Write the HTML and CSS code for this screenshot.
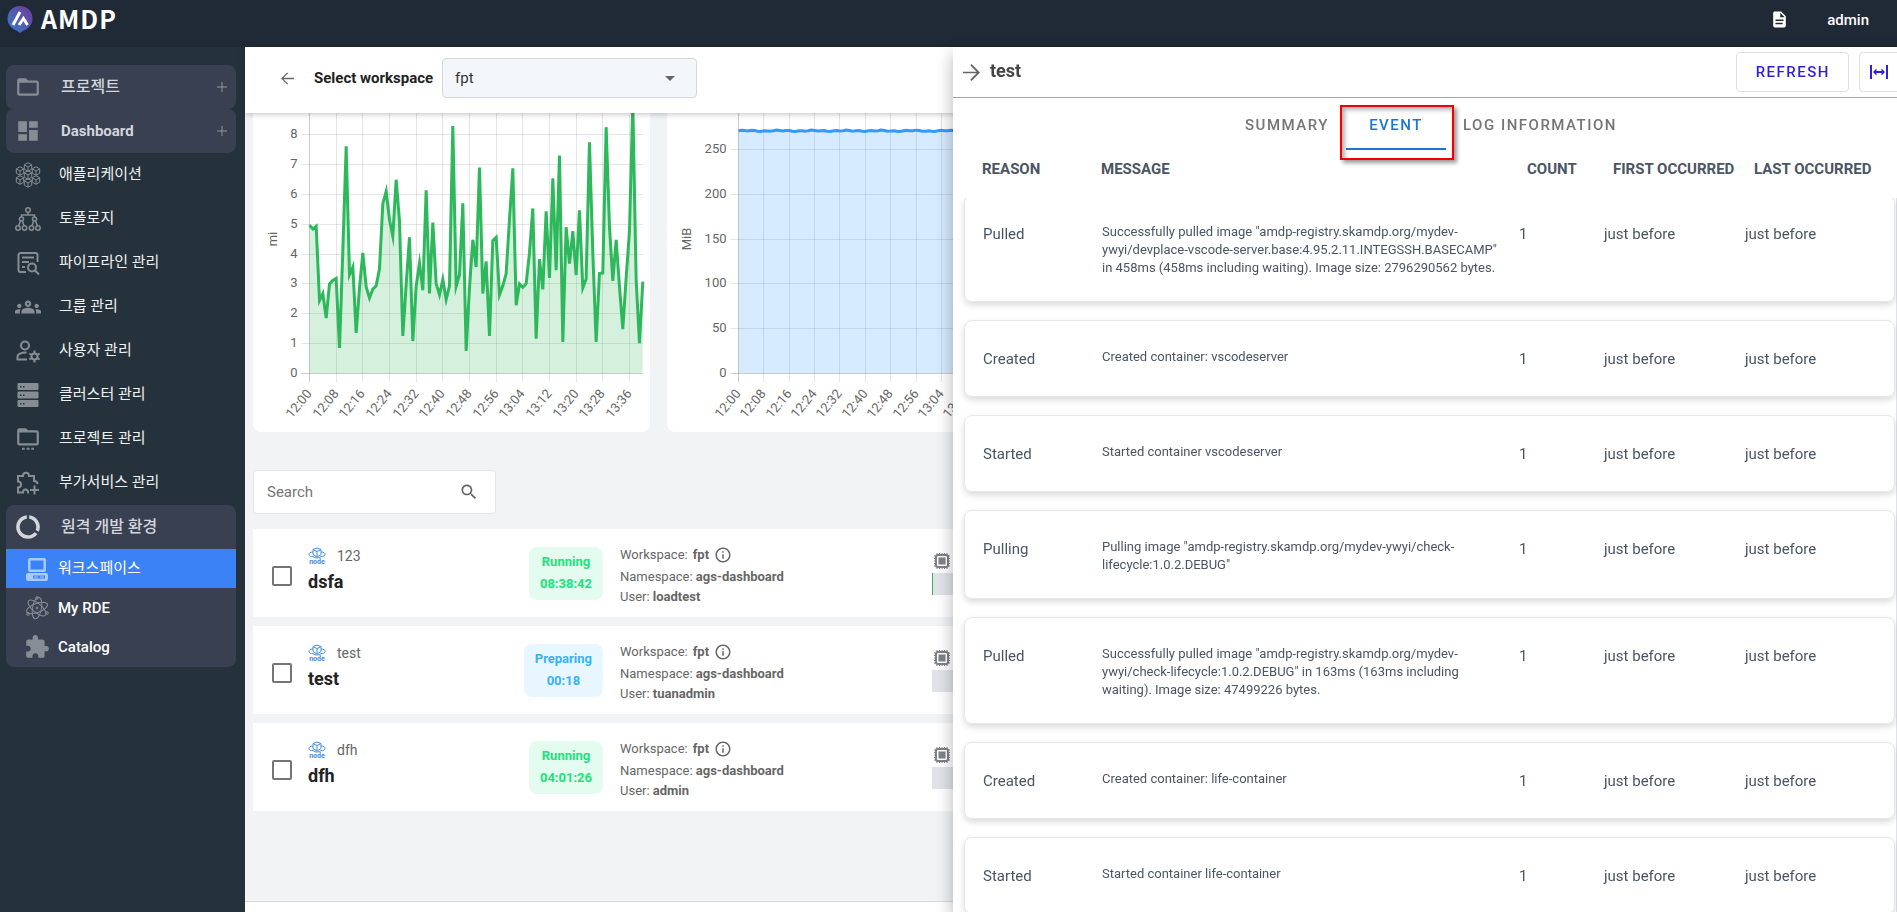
FILE: index.html
```html
<!DOCTYPE html>
<html lang="ko">

<head>
    <meta charset="UTF-8">
    <meta name="viewport" content="width=device-width, initial-scale=1.0">
    <title>AMDP</title>
    <link rel="stylesheet" href="styles.css">
</head>

<body>
    <!-- shared icons -->
    <svg class="sprite" aria-hidden="true">
        <symbol id="i-node" viewBox="0 0 18 18">
            <g fill="none" stroke="currentColor" stroke-width="1">
                <path d="M9 1l4 1.5v5L9 10 5 7.500v-5zM5.500 3L9 4.500 12.500 3M9 4.500V9" />
                <path d="M5 5C2 5 1 6 1 7.500S3 10 5 9.500c2 2 6 2 8 0 2 .5 4-.5 4-2S16 5 13 5" />
            </g>
            <text x="9" y="17" text-anchor="middle" class="node-text">node</text>
        </symbol>
        <symbol id="i-info" viewBox="0 0 24 24">
            <path d="M11 7h2v2h-2zm0 4h2v6h-2zm1-9C6.480 2 2 6.480 2 12s4.480 10 10 10 10-4.480 10-10S17.520 2 12 2zm0 18c-4.410 0-8-3.590-8-8s3.590-8 8-8 8 3.590 8 8-3.590 8-8 8z" />
        </symbol>
        <symbol id="i-chip" viewBox="0 0 16 16">
            <path d="M3 0v2M5.500 0v2M8 0v2M10.500 0v2M13 0v2M3 14v2M5.500 14v2M8 14v2M10.500 14v2M13 14v2M0 3h2M0 5.500h2M0 8h2M0 10.500h2M0 13h2M14 3h2M14 5.500h2M14 8h2M14 10.500h2M14 13h2" stroke="currentColor" stroke-width="1" />
            <rect x="2" y="2" width="12" height="12" rx="2" fill="none" stroke="currentColor" stroke-width="2" />
            <rect x="4.500" y="4.500" width="7" height="7" />
        </symbol>
    </svg>

    <header class="topbar">
        <a class="brand" href="#">
            <svg class="brand-logo" viewBox="0 0 26 28">
                <defs>
                    <linearGradient id="logo-fill" x1="0" y1="1" x2="1" y2="0">
                        <stop offset="0.2" stop-color="#3f6fc4" />
                        <stop offset="0.9" stop-color="#6b3f9a" />
                    </linearGradient>
                </defs>
                <path fill="url(#logo-fill)" d="M13 0c7 0 12.500 5.200 12.500 12.500 0 4-1.500 7-4.500 9.500-3 2.300-6 3-8 5-2-2-5-2.700-8-5-3-2.500-4.500-5.500-4.500-9.500C.5 5.200 6 0 13 0z" />
                <path fill="none" stroke="#fff" stroke-width="3" d="M6 19l7-13M12 19l4.500-6.500L20.500 19" />
            </svg>
            <span class="brand-name">AMDP</span>
        </a>
        <button class="doc-btn" aria-label="Documents">
            <svg class="doc-icon" viewBox="0 0 24 24"><path d="M14 2H6c-1.100 0-2 .9-2 2v16c0 1.100.9 2 2 2h12c1.100 0 2-.9 2-2V8l-6-6zm2 16H7v-2h9v2zm1-4H7v-2h10v2zm-4-5V3.500L18.500 9H13z" /></svg>
        </button>
        <button class="user-btn">admin</button>
    </header>

    <div class="layout">
        <nav class="sidebar">
            <div class="group">
                <a class="group-head" href="#">
                    <svg class="icon" viewBox="0 0 24 24"><path d="M20 6h-8l-2-2H4c-1.100 0-2 .9-2 2v12c0 1.100.9 2 2 2h16c1.100 0 2-.9 2-2V8c0-1.100-.9-2-2-2zm0 12H4V8h16v10z" /></svg>
                    <span>프로젝트</span>
                    <svg class="plus" viewBox="0 0 10 10"><path d="M5 0v10M0 5h10" /></svg>
                </a>
            </div>
            <div class="group">
                <a class="group-head" href="#">
                    <svg class="icon" viewBox="0 0 24 24"><path d="M3 13h8V3H3v10zm0 8h8v-6H3v6zm10 0h8V11h-8v10zm0-18v6h8V3h-8z" /></svg>
                    <span class="latin">Dashboard</span>
                    <svg class="plus" viewBox="0 0 10 10"><path d="M5 0v10M0 5h10" /></svg>
                </a>
            </div>
            <ul class="menu">
                <li><a href="#">
                    <svg class="icon line" viewBox="0 0 26 26">
                        <defs>
                            <path id="cube" d="M0-4.300L3.700-2.200V2.200L0 4.300-3.700 2.200V-2.200zM-3.700-2.200L0 0 3.700-2.200M0 0V4.300" />
                        </defs>
                        <use href="#cube" x="13" y="5" /><use href="#cube" x="5" y="9" /><use href="#cube" x="21" y="9" />
                        <use href="#cube" x="13" y="13" /><use href="#cube" x="5" y="18" /><use href="#cube" x="21" y="18" />
                        <use href="#cube" x="13" y="21" />
                    </svg>
                    <span>애플리케이션</span></a></li>
                <li><a href="#">
                    <svg class="icon line bold" viewBox="0 0 26 26">
                        <circle cx="13" cy="4" r="2.300" /><circle cx="6.500" cy="13" r="2" /><circle cx="19.500" cy="13" r="2" />
                        <circle cx="3" cy="22" r="2.200" /><circle cx="9.500" cy="22" r="2.200" /><circle cx="16.500" cy="22" r="2.200" /><circle cx="23" cy="22" r="2.200" />
                        <path d="M13 6v3M6.500 11V9h13v2M5.500 15L3.500 20M7.500 15l1.500 5M18.500 15L17 20M20.500 15l2 5" />
                    </svg>
                    <span>토폴로지</span></a></li>
                <li><a href="#">
                    <svg class="icon line thick" viewBox="0 0 26 26">
                        <path d="M11 22H5.500a2 2 0 0 1-2-2V5a2 2 0 0 1 2-2h15a2 2 0 0 1 2 2v7M7 7.500h12M7 12h7M7 17h3" />
                        <circle cx="17" cy="17.500" r="4" /><path d="M20 20.500l4 4" />
                    </svg>
                    <span>파이프라인 관리</span></a></li>
                <li><a href="#">
                    <svg class="icon" viewBox="0 0 24 24"><path d="M4 13c1.100 0 2-.9 2-2s-.9-2-2-2-2 .9-2 2 .9 2 2 2zm1.130 1.100C4.760 14.040 4.390 14 4 14c-.99 0-1.930.21-2.780.58C.48 14.900 0 15.620 0 16.430V18h4.500v-1.610c0-.83.23-1.610.63-2.290zM20 13c1.100 0 2-.9 2-2s-.9-2-2-2-2 .9-2 2 .9 2 2 2zm4 3.430c0-.81-.48-1.530-1.220-1.850-.85-.37-1.790-.58-2.780-.58-.39 0-.76.040-1.130.1.400.68.630 1.460.630 2.290V18H24v-1.570zm-7.760-2.780C15.070 13.130 13.630 12.750 12 12.750s-3.070.39-4.240.9C6.680 14.130 6 15.210 6 16.390V18h12v-1.610c0-1.180-.68-2.260-1.760-2.740zM12 6c-1.660 0-3 1.340-3 3s1.340 3 3 3 3-1.340 3-3-1.340-3-3-3zm0 2c.55 0 1 .45 1 1s-.45 1-1 1-1-.45-1-1 .45-1 1-1z" fill-rule="evenodd" /></svg>
                    <span>그룹 관리</span></a></li>
                <li><a href="#">
                    <svg class="icon line thick" viewBox="0 0 26 26">
                        <circle cx="10" cy="7.500" r="4" /><path d="M12 21.500H2.500V19c0-3 4-4.500 9-4.500" />
                        <circle cx="19.500" cy="18.500" r="3" /><path d="M19.500 12.500v3M19.500 21.500v3M14.300 15.500l2.600 1.500M22.100 20l2.600 1.500M14.300 21.500l2.600-1.500M22.100 17l2.600-1.500" />
                    </svg>
                    <span>사용자 관리</span></a></li>
                <li><a href="#">
                    <svg class="icon" viewBox="0 0 26 26"><path fill-rule="evenodd" d="M3.500 1h19a1 1 0 0 1 1 1v5a1 1 0 0 1-1 1h-19a1 1 0 0 1-1-1V2a1 1 0 0 1 1-1zM5 4v1.500h1.500V4zm3 0v1.500h1.500V4zM3.500 9.500h19a1 1 0 0 1 1 1v5a1 1 0 0 1-1 1h-19a1 1 0 0 1-1-1v-5a1 1 0 0 1 1-1zM5 12.500V14h1.500v-1.500zm3 0V14h1.500v-1.500zM3.500 18h19a1 1 0 0 1 1 1v5a1 1 0 0 1-1 1h-19a1 1 0 0 1-1-1v-5a1 1 0 0 1 1-1zM5 21v1.500h1.500V21zm3 0v1.500h1.500V21z" /></svg>
                    <span>클러스터 관리</span></a></li>
                <li><a href="#">
                    <svg class="icon" viewBox="0 0 24 24"><path d="M20 4h-8l-2-2H4c-1.100 0-2 .9-2 2v12c0 1.100.9 2 2 2h16c1.100 0 2-.9 2-2V6c0-1.100-.9-2-2-2zm0 12H4V6h16v10zM6.500 20h2.500v2H6.500zM10.800 20h2.500v2h-2.500zM15 20h2.500v2H15z" /></svg>
                    <span>프로젝트 관리</span></a></li>
                <li><a href="#">
                    <svg class="icon line thick" viewBox="0 0 26 26">
                        <path d="M14 22.500h-1c0-4-5-4-5 0H3v-5c4 0 4-6 0-6V6h5c0-4.500 6-4.500 6 0h5v5c2 0 3.500 1 3.500 3M19.500 15.500v9M15 20h9" />
                    </svg>
                    <span>부가서비스 관리</span></a></li>
            </ul>
            <div class="group">
                <a class="group-head lit" href="#">
                    <svg class="icon" viewBox="1 1 22 22"><path d="M13 2.050v3.030c3.390.49 6 3.390 6 6.920 0 .9-.18 1.750-.48 2.540l2.600 1.530c.56-1.240.88-2.620.88-4.070 0-5.180-3.950-9.450-9-9.950zM12 19c-3.870 0-7-3.130-7-7 0-3.530 2.610-6.430 6-6.920V2.050c-5.060.5-9 4.760-9 9.950 0 5.520 4.470 10 9.990 10 3.310 0 6.240-1.610 8.060-4.090l-2.600-1.530C16.170 17.980 14.210 19 12 19z" /></svg>
                    <span>원격 개발 환경</span>
                </a>
                <ul class="submenu">
                    <li class="active"><a href="#">
                        <svg class="icon" viewBox="0 0 26 26"><path fill-rule="evenodd" d="M6 2h14a2 2 0 0 1 2 2v10a2 2 0 0 1-2 2H6a2 2 0 0 1-2-2V4a2 2 0 0 1 2-2zm.5 2.500v9h13v-9zM4 17h18a2 2 0 0 1 2 2v4a2 2 0 0 1-2 2H4a2 2 0 0 1-2-2v-4a2 2 0 0 1 2-2zm5 2.500v3h12v-3zM10 20.500h4v1h-4zm6 0h4v1h-4z" /></svg>
                        <span>워크스페이스</span></a></li>
                    <li><a href="#">
                        <svg class="icon line" viewBox="0 0 26 26">
                            <ellipse cx="13" cy="13" rx="11" ry="4.500" transform="rotate(-20 13 13)" />
                            <ellipse cx="13" cy="13" rx="11" ry="4.500" transform="rotate(40 13 13)" />
                            <ellipse cx="13" cy="13" rx="11" ry="4.500" transform="rotate(100 13 13)" />
                            <circle cx="13" cy="13" r="1" /><circle cx="13" cy="3" r="1.300" /><circle cx="4" cy="19" r="1.300" /><circle cx="23" cy="18" r="1.300" />
                        </svg>
                        <span>My RDE</span></a></li>
                    <li><a href="#">
                        <svg class="icon" viewBox="0 0 24 24"><path d="M20.500 11H19V7c0-1.100-.9-2-2-2h-4V3.500C13 2.120 11.880 1 10.500 1S8 2.120 8 3.500V5H4c-1.100 0-1.990.9-1.990 2v3.800H3.500c1.490 0 2.700 1.210 2.700 2.700s-1.210 2.700-2.700 2.700H2V20c0 1.100.9 2 2 2h3.800v-1.500c0-1.490 1.210-2.700 2.700-2.700 1.490 0 2.700 1.210 2.700 2.700V22H17c1.100 0 2-.9 2-2v-4h1.500c1.380 0 2.500-1.120 2.500-2.500S21.880 11 20.500 11z" /></svg>
                        <span>Catalog</span></a></li>
                </ul>
            </div>
        </nav>

        <main class="main">
            <div class="subheader">
                <button class="back-btn" aria-label="Back">
                    <svg viewBox="4 4 16 16"><path d="M20 11.200H7.100l5.600-5.600L11.600 4.500 4 12l7.600 7.500 1.100-1.100-5.600-5.600H20z" /></svg>
                </button>
                <label class="select-label" for="workspace">Select workspace</label>
                <div class="select-wrap">
                    <select id="workspace">
                        <option>fpt</option>
                    </select>
                </div>
            </div>

            <div class="content">
                <div class="charts">
                    <div class="card"><svg class="chart" id="cpu-chart" viewBox="0 0 397 319"></svg></div>
                    <div class="card"><svg class="chart" id="mem-chart" viewBox="0 0 397 319"></svg></div>
                </div>

                <div class="search">
                    <input type="text" placeholder="Search" aria-label="Search">
                    <svg viewBox="0 0 24 24"><path d="M15.500 14h-.79l-.28-.27C15.410 12.590 16 11.110 16 9.500 16 5.910 13.090 3 9.500 3S3 5.910 3 9.500 5.910 16 9.500 16c1.610 0 3.090-.59 4.230-1.570l.27.28v.79l5 4.990L20.490 19l-4.990-5zm-6 0C7.010 14 5 11.990 5 9.500S7.010 5 9.500 5 14 7.010 14 9.500 11.990 14 9.500 14z" /></svg>
                </div>

                <div class="rows">
                    <div class="row">
                        <input type="checkbox" aria-label="dsfa">
                        <div class="title">
                            <div class="kind"><svg><use href="#i-node" /></svg><span>123</span></div>
                            <h3>dsfa</h3>
                        </div>
                        <div class="badge running"><span>Running</span><span>08:38:42</span></div>
                        <div class="info">
                            <p>Workspace: <b>fpt</b> <svg><use href="#i-info" /></svg></p>
                            <p>Namespace: <b>ags-dashboard</b></p>
                            <p>User: <b>loadtest</b></p>
                        </div>
                        <div class="usage">
                            <svg><use href="#i-chip" /></svg>
                            <div class="bar"><div class="bar-fill" style="width: 1px"></div></div>
                        </div>
                    </div>
                    <div class="row">
                        <input type="checkbox" aria-label="test">
                        <div class="title">
                            <div class="kind"><svg><use href="#i-node" /></svg><span>test</span></div>
                            <h3>test</h3>
                        </div>
                        <div class="badge preparing"><span>Preparing</span><span>00:18</span></div>
                        <div class="info">
                            <p>Workspace: <b>fpt</b> <svg><use href="#i-info" /></svg></p>
                            <p>Namespace: <b>ags-dashboard</b></p>
                            <p>User: <b>tuanadmin</b></p>
                        </div>
                        <div class="usage">
                            <svg><use href="#i-chip" /></svg>
                            <div class="bar"></div>
                        </div>
                    </div>
                    <div class="row">
                        <input type="checkbox" aria-label="dfh">
                        <div class="title">
                            <div class="kind"><svg><use href="#i-node" /></svg><span>dfh</span></div>
                            <h3>dfh</h3>
                        </div>
                        <div class="badge running"><span>Running</span><span>04:01:26</span></div>
                        <div class="info">
                            <p>Workspace: <b>fpt</b> <svg><use href="#i-info" /></svg></p>
                            <p>Namespace: <b>ags-dashboard</b></p>
                            <p>User: <b>admin</b></p>
                        </div>
                        <div class="usage">
                            <svg><use href="#i-chip" /></svg>
                            <div class="bar"></div>
                        </div>
                    </div>
                </div>
            </div>
            <footer class="footer"></footer>
        </main>

        <aside class="drawer">
            <div class="drawer-head">
                <button class="close-btn" aria-label="Close">
                    <svg viewBox="4 4 16 16"><path d="M12 4l-1.200 1.200 6 6H4v1.600h12.800l-6 6L12 20l8-8z" /></svg>
                </button>
                <h2>test</h2>
                <div class="actions">
                    <button class="outline-btn">REFRESH</button>
                    <button class="outline-btn square" aria-label="Resize">
                        <svg viewBox="0 0 18 14"><path d="M0 0h2v14H0zM16 0h2v14h-2zM3 7l3.500-3.500V6h5V3.500L15 7l-3.500 3.500V8h-5v2.500z" /></svg>
                    </button>
                </div>
            </div>

            <div class="tabs" role="tablist">
                <button role="tab" class="tab">SUMMARY</button>
                <button role="tab" class="tab active" aria-selected="true">EVENT</button>
                <button role="tab" class="tab">LOG INFORMATION</button>
            </div>

            <table class="events">
                <thead>
                    <tr>
                        <th>REASON</th>
                        <th>MESSAGE</th>
                        <th>COUNT</th>
                        <th>FIRST OCCURRED</th>
                        <th>LAST OCCURRED</th>
                    </tr>
                </thead>
                <tbody>
                    <tr>
                        <td>Pulled</td>
                        <td class="msg">Successfully pulled image "amdp-registry.skamdp.org/mydev-ywyi/devplace-vscode-server.base:4.95.2.11.INTEGSSH.BASECAMP" in 458ms (458ms including waiting). Image size: 2796290562 bytes.</td>
                        <td>1</td>
                        <td>just before</td>
                        <td>just before</td>
                    </tr>
                    <tr>
                        <td>Created</td>
                        <td class="msg">Created container: vscodeserver</td>
                        <td>1</td>
                        <td>just before</td>
                        <td>just before</td>
                    </tr>
                    <tr>
                        <td>Started</td>
                        <td class="msg">Started container vscodeserver</td>
                        <td>1</td>
                        <td>just before</td>
                        <td>just before</td>
                    </tr>
                    <tr>
                        <td>Pulling</td>
                        <td class="msg">Pulling image "amdp-registry.skamdp.org/mydev-ywyi/check-lifecycle:1.0.2.DEBUG"</td>
                        <td>1</td>
                        <td>just before</td>
                        <td>just before</td>
                    </tr>
                    <tr>
                        <td>Pulled</td>
                        <td class="msg">Successfully pulled image "amdp-registry.skamdp.org/mydev-ywyi/check-lifecycle:1.0.2.DEBUG" in 163ms (163ms including waiting). Image size: 47499226 bytes.</td>
                        <td>1</td>
                        <td>just before</td>
                        <td>just before</td>
                    </tr>
                    <tr>
                        <td>Created</td>
                        <td class="msg">Created container: life-container</td>
                        <td>1</td>
                        <td>just before</td>
                        <td>just before</td>
                    </tr>
                    <tr>
                        <td>Started</td>
                        <td class="msg">Started container life-container</td>
                        <td>1</td>
                        <td>just before</td>
                        <td>just before</td>
                    </tr>
                </tbody>
            </table>
        </aside>
    </div>

    <script src="charts.js"></script>
</body>

</html>
```

FILE: charts.js
```js
(function () {
    'use strict';

    var NS = 'http://www.w3.org/2000/svg',
        BOTTOM = 260,
        labels = ['12:00', '12:08', '12:16', '12:24', '12:32', '12:40', '12:48', '12:56', '13:04', '13:12', '13:20', '13:28', '13:36'];

    var cpu = [4.95, 4.82, 4.91, 2.43, 2.66, 1.84, 2.98, 3.10, 3.17, 0.84, 4.1, 7.59, 3.29, 3.55, 1.34, 2.85, 4.02, 2.88, 2.51, 2.81,
        2.92, 3.49, 5.67, 6.08, 5.13, 4.58, 6.47, 5.08, 1.24, 2.96, 4.54, 1.07, 2.90, 3.68, 2.77, 6.12, 2.66, 5.04, 2.99, 2.62,
        3.13, 2.46, 2.92, 8.27, 2.90, 3.29, 5.68, 0.74, 2.85, 4.46, 3.55, 6.88, 2.66, 3.74, 1.24, 4.43, 4.54, 2.62, 2.92, 3.33,
        5.13, 6.85, 2.27, 2.98, 2.87, 2.99, 4.02, 5.51, 1.15, 3.81, 2.80, 5.41, 3.18, 6.52, 3.44, 7.28, 1.04, 4.88, 3.66, 4.75,
        3.28, 5.45, 2.85, 3.15, 7.72, 4.02, 1.04, 3.33, 3.35, 8.23, 4.91, 3.08, 4.46, 2.90, 1.47, 3.18, 4.74, 9.00, 3.13, 1.00, 3.06];

    var mem = [];
    for (var i = 0; i <= 100; i++) {
        mem.push(270.3 + Math.sin(i * 1.7) * 0.5 + Math.sin(i * 0.6) * 0.4);
    }

    function add(svg, tag, attrs, text) {
        var el = document.createElementNS(NS, tag);
        Object.keys(attrs).forEach(function (k) { el.setAttribute(k, attrs[k]); });
        if (text !== undefined) { el.textContent = text; }
        svg.appendChild(el);
    }

    function draw(id, o) {
        var svg = document.getElementById(id),
            right = o.left + o.width,
            points = o.data.map(function (v, n) {
                return (o.left + n * o.width / 100).toFixed(2) + ',' + (BOTTOM - v * o.unit).toFixed(2);
            });

        for (var v = 0; v <= o.max; v += o.step) {
            var y = Math.round(BOTTOM - v * o.unit) + 0.5;
            add(svg, 'line', { x1: o.left - 8, x2: right, y1: y, y2: y, 'class': v ? 'grid' : 'grid axis' });
            add(svg, 'text', { x: o.left - 12, y: y + 3, 'text-anchor': 'end' }, v);
        }
        labels.forEach(function (label, n) {
            var x = Math.floor(o.left + n * o.width / 12.5) + 0.5;
            add(svg, 'line', { x1: x, x2: x, y1: 0, y2: BOTTOM + 9, 'class': n ? 'grid' : 'grid axis' });
            add(svg, 'text', { transform: 'translate(' + (x + 3) + ' ' + (BOTTOM + 21) + ') rotate(-50)', 'text-anchor': 'end' }, label);
        });
        add(svg, 'text', { transform: 'translate(24 126) rotate(-90)', 'text-anchor': 'middle' }, o.title);
        add(svg, 'polygon', { points: o.left + ',' + BOTTOM + ' ' + points.join(' ') + ' ' + right + ',' + BOTTOM, fill: o.color, 'fill-opacity': 0.2 });
        add(svg, 'polyline', { points: points.join(' '), stroke: o.color, 'class': 'series' });
    }

    draw('cpu-chart', { data: cpu, left: 56.5, width: 333.3, unit: 29.87, step: 1, max: 8, title: 'mi', color: '#2eb85c' });
    draw('mem-chart', { data: mem, left: 71.5, width: 317, unit: 0.896, step: 50, max: 250, title: 'MiB', color: '#3399ff' });
})();
```

FILE: styles.css
```css
*,
*:before,
*:after {
    box-sizing: border-box;
    margin: 0;
    padding: 0;
}

html,
body {
    height: 100%;
    overflow: hidden;
}

body {
    display: flex;
    flex-direction: column;
    font-family: Roboto, "Noto Sans CJK KR", sans-serif;
    font-size: 15px;
    color: #666;
    background: #f2f3f5;
}

a {
    color: inherit;
    text-decoration: none;
}

ul {
    list-style: none;
}

svg {
    flex-shrink: 0;
    fill: currentColor;
}

button {
    font: inherit;
    color: inherit;
    border: none;
    background: none;
    cursor: pointer;
}

.sprite {
    display: none;
}

/* top bar */
.topbar {
    display: flex;
    align-items: center;
    height: 47px;
    padding: 0 28px 8px 7px;
    color: #fff;
    background: #202936;
}

.brand {
    display: flex;
    align-items: center;
    gap: 8px;
    margin-right: auto;
}

.brand-logo {
    width: 26px;
    height: 28px;
}

.brand-name {
    padding-bottom: 3px;
    font-family: "Noto Sans CJK KR", sans-serif;
    font-size: 25px;
    line-height: 32px;
    font-weight: 700;
    letter-spacing: 1px;
}

.doc-btn {
    margin-right: 38px;
}

.doc-icon {
    display: block;
    width: 19px;
    height: 19px;
}

.user-btn {
    font-weight: 500;
}

.layout {
    display: flex;
    flex: 1;
    min-height: 0;
}

/* sidebar */
.sidebar {
    flex-shrink: 0;
    width: 245px;
    padding: 18px 9px 0 6px;
    color: #f0f1f2;
    background: #25323b;
}

.group {
    overflow: hidden;
    border-radius: 8px;
    background: #394051;
}

.sidebar .icon {
    width: 26px;
    height: 26px;
    color: #868d94;
}

.icon.line {
    fill: none;
    stroke: currentColor;
    stroke-width: 1;
}

.icon.line.bold {
    stroke-width: 1.5;
}

.icon.line.thick {
    stroke-width: 2;
}

.group-head {
    display: flex;
    align-items: center;
    height: 44px;
    padding: 0 9px;
    font-size: 16px;
    font-weight: 500;
    color: #d3d6dc;
}

.group-head .icon {
    margin-right: 20px;
}

.group-head.lit .icon {
    color: #d3d6da;
}

.group-head span,
.menu span,
.submenu .active span {
    padding-bottom: 5px;
}

.group-head .latin {
    padding-bottom: 1px;
    font-size: 15px;
    font-weight: 700;
}

.plus {
    width: 10px;
    height: 10px;
    margin-left: auto;
    stroke: #8e959f;
    stroke-width: 1;
}

.menu a {
    display: flex;
    align-items: center;
    gap: 18px;
    height: 44px;
    padding-left: 9px;
}

.submenu {
    padding-bottom: 1px;
}

.submenu a {
    display: flex;
    align-items: center;
    gap: 8px;
    height: 39px;
    padding-left: 18px;
    font-weight: 500;
    color: #fff;
}

.submenu .active {
    background: #3b82f6;
}

.submenu .active a {
    font-weight: 400;
}

.submenu .active .icon {
    color: #a9caff;
}

/* main area */
.main {
    display: flex;
    flex: 1;
    flex-direction: column;
    min-width: 0;
}

.subheader {
    position: relative;
    z-index: 1;
    display: flex;
    flex-shrink: 0;
    align-items: center;
    height: 66px;
    padding: 0 36px 4px;
    background: #fff;
    box-shadow: 0 1px 6px rgba(0, 0, 0, 0.25);
}

.back-btn svg {
    display: block;
    width: 13px;
    height: 13px;
}

.select-label {
    margin: 0 9px 0 20px;
    font-size: 15px;
    font-weight: 700;
    color: #222;
}

.select-wrap {
    position: relative;
}

.select-wrap:after {
    content: "";
    position: absolute;
    top: 18px;
    right: 22px;
    border: 5px solid transparent;
    border-top-color: #666;
    pointer-events: none;
}

.select-wrap select {
    width: 255px;
    height: 40px;
    padding: 0 12px;
    font: inherit;
    color: #333;
    border: 1px solid #d5d7dd;
    border-radius: 4px;
    background: #f3f7fa;
    appearance: none;
}

.content {
    flex: 1;
    min-height: 0;
    overflow: hidden;
    padding: 0 5px 0 8px;
}

.charts {
    display: grid;
    grid-template-columns: repeat(4, 1fr);
    gap: 17px;
}

.card {
    overflow: hidden;
    border-radius: 0 0 8px 8px;
    background: #fff;
}

.chart {
    display: block;
    width: 100%;
    font-size: 13px;
}

.chart .grid {
    stroke: rgba(0, 0, 0, 0.1);
}

.chart .axis {
    stroke: rgba(0, 0, 0, 0.2);
}

.chart .series {
    fill: none;
    stroke-width: 3;
    stroke-miterlimit: 8;
}

.search {
    display: flex;
    align-items: center;
    width: 243px;
    height: 44px;
    margin: 38px 0 15px;
    padding: 0 16px 0 13px;
    border: 1px solid #e4e6e9;
    border-radius: 4px;
    background: #fff;
}

.search input {
    flex: 1;
    min-width: 0;
    font: inherit;
    border: none;
    outline: none;
}

.search input::placeholder {
    color: #757575;
}

.search svg {
    width: 20px;
    height: 20px;
}

.rows {
    display: grid;
    gap: 9px;
}

.row {
    display: grid;
    grid-template-columns: 20px 180px 99px 296px 1fr;
    gap: 16px;
    height: 88px;
    padding: 0 19px;
    background: #fff;
}

.row input {
    width: 20px;
    height: 20px;
    margin-top: 37px;
    border: 2px solid #757575;
    border-radius: 2px;
    appearance: none;
}

.title {
    padding-top: 17px;
}

.kind {
    display: flex;
    align-items: center;
    gap: 11px;
    height: 20px;
    font-size: 14px;
}

.kind svg {
    width: 18px;
    height: 18px;
    color: #3f8ee0;
}

.node-text {
    font-size: 7px;
    font-weight: 700;
}

.title h3 {
    margin-top: 4px;
    font-size: 18px;
    line-height: 24px;
    font-weight: 700;
    color: #222;
}

.badge {
    display: flex;
    flex-direction: column;
    justify-self: end;
    height: 53px;
    margin-top: 18px;
    padding: 4px 11px;
    border-radius: 8px;
    font-size: 13px;
    line-height: 22px;
    font-weight: 700;
    text-align: center;
}

.running {
    color: #1be37c;
    background: #e4fbf0;
}

.preparing {
    color: #38b2f8;
    background: #e8f7ff;
}

.info {
    padding: 14px 0 0 1px;
    font-size: 13px;
    line-height: 20px;
}

.info p:first-child {
    display: flex;
    align-items: center;
    gap: 5px;
    height: 24px;
}

.info svg {
    width: 18px;
    height: 18px;
}

.usage {
    padding: 24px 0 0 1px;
}

.usage svg {
    display: block;
    width: 16px;
    height: 16px;
    margin: 0 2px 4px;
    color: #808285;
}

.bar {
    height: 22px;
    background: #e2e3e9;
}

.bar-fill {
    height: 100%;
    background: #2eb85c;
}

.footer {
    flex-shrink: 0;
    height: 11px;
    border-top: 1px solid #d8d9dc;
    background: #fff;
}

/* event drawer, slides over the main area */
.drawer {
    position: fixed;
    top: 47px;
    right: 0;
    bottom: 0;
    z-index: 2;
    width: 944px;
    max-width: 100%;
    overflow: hidden;
    background: #fff;
    box-shadow: 0 8px 16px rgba(0, 0, 0, 0.3);
}

.drawer-head {
    display: flex;
    align-items: center;
    height: 51px;
    padding-left: 10px;
    border-bottom: 1px solid #a6a6a6;
}

.close-btn svg {
    display: block;
    width: 17px;
    height: 17px;
}

.drawer-head h2 {
    flex: 1;
    margin-left: 10px;
    padding-bottom: 3px;
    font-size: 18px;
    font-weight: 700;
    color: #444;
}

.actions {
    display: flex;
    gap: 10px;
    margin-right: -12px;
}

.outline-btn {
    height: 40px;
    padding: 0 18px 0 19px;
    font-weight: 500;
    letter-spacing: 0.1em;
    color: #2f1edb;
    border: 1px solid #dcdfe4;
    border-radius: 4px;
}

.outline-btn.square {
    width: 50px;
    padding: 0 10px;
}

.square svg {
    display: block;
    width: 18px;
    height: 14px;
}

.tabs {
    display: flex;
    justify-content: center;
    padding: 4px 0 0 12px;
}

.tab {
    position: relative;
    z-index: 2;
    min-width: 100px;
    height: 48px;
    padding: 0 17px;
    font-weight: 500;
    letter-spacing: 0.1em;
    color: #757575;
    border-bottom: 2px solid transparent;
}

.tab.active {
    color: #1976d2;
    border-color: #1976d2;
}

.tab.active:after {
    content: "";
    position: absolute;
    top: 3px;
    right: -8px;
    bottom: -12px;
    left: -6px;
    border: 2px solid #f00000;
    box-shadow: 3px 3px 4px rgba(0, 0, 0, 0.4), inset 3px 3px 4px rgba(0, 0, 0, 0.3);
}

.events {
    display: block;
    margin-left: 11px;
    color: #4b5563;
}

.events thead,
.events tbody {
    display: block;
}

.events thead {
    position: relative;
    z-index: 1;
    height: 48px;
    background: #fff;
}

.events tr {
    display: grid;
    grid-template-columns: 119px 417px 85px 141px 1fr;
}

.events thead tr {
    grid-template-columns: 119px 426px 86px 141px 1fr;
    padding: 8px 0 0 18px;
}

.events th {
    line-height: 22px;
    text-align: left;
    white-space: nowrap;
}

.events tbody {
    margin-top: -3px;
    padding-right: 1px;
    border-right: 1px solid #dfe2e8;
}

.events tbody tr {
    min-height: 77px;
    margin-bottom: 18px;
    padding: 27px 0 24px 18px;
    border: 1px solid #e5e7eb;
    border-radius: 8px;
    box-shadow: 0 3px 6px rgba(0, 0, 0, 0.15);
}

.events td {
    line-height: 22px;
}

.events .msg {
    padding-right: 12px;
    font-size: 13px;
    line-height: 18px;
}
```
